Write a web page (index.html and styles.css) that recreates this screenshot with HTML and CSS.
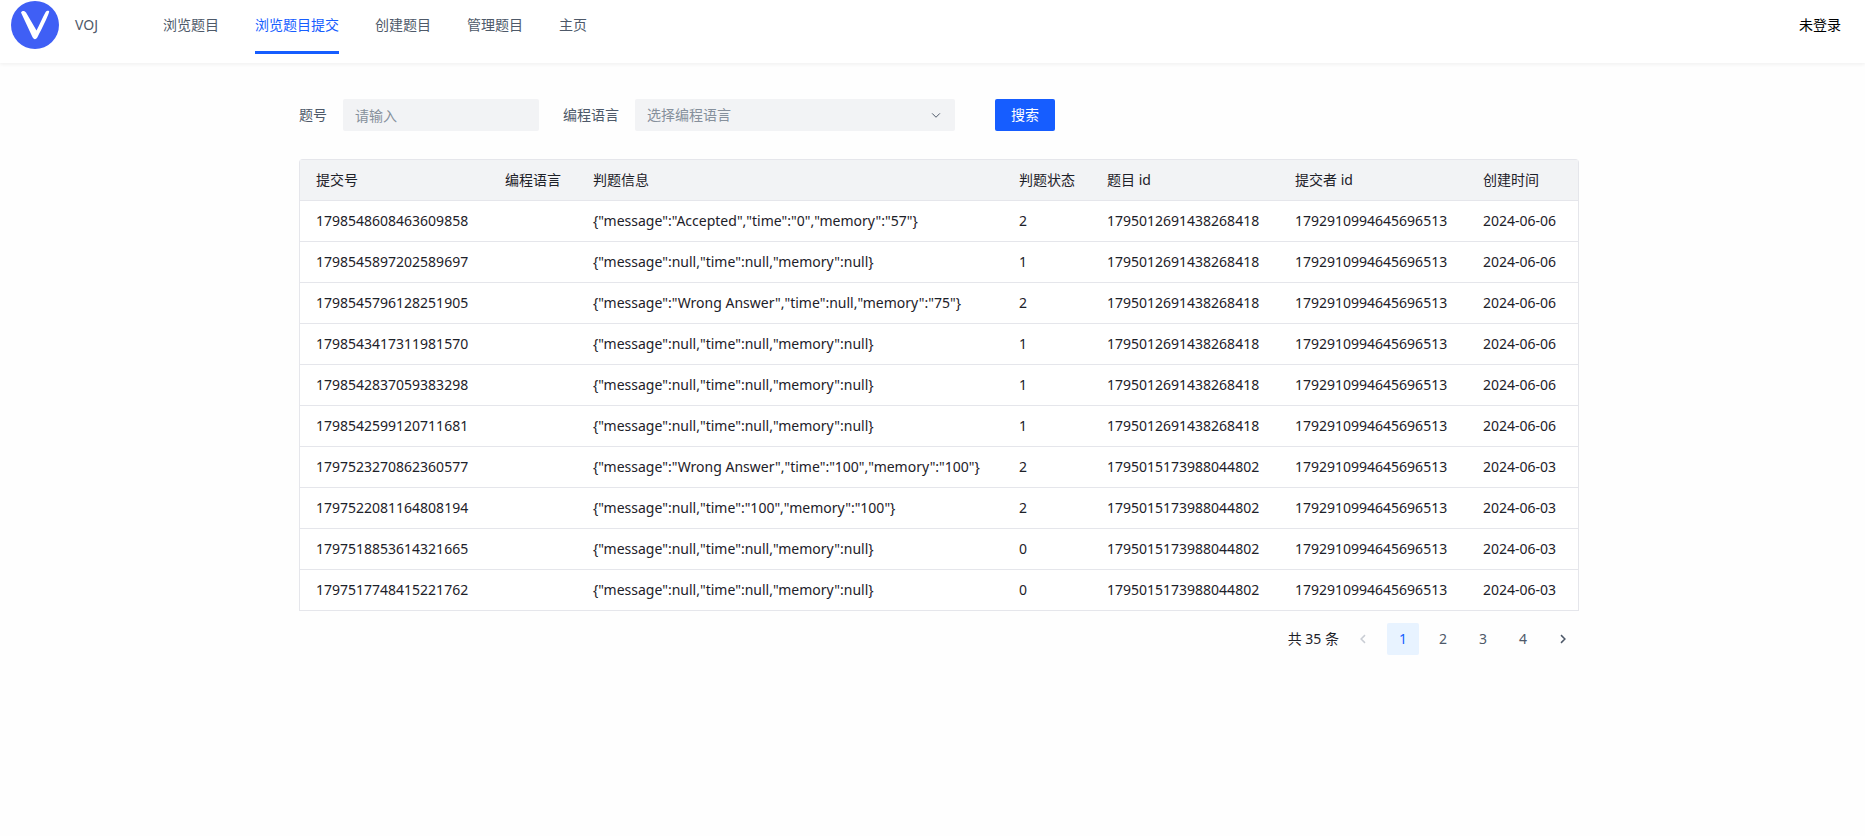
FILE: index.html
```html
<!DOCTYPE html>
<html lang="zh-CN">
<head>
<meta charset="utf-8">
<meta name="viewport" content="width=device-width, initial-scale=1">
<title>VOJ</title>
<link rel="stylesheet" href="styles.css">
</head>
<body>
<header class="header">
  <a class="brand" href="#">
    <svg class="brand-logo" viewBox="0 0 48 48" aria-hidden="true">
      <circle cx="24" cy="24" r="24" fill="#3f5ff5"/>
      <path d="M10 11.500C10.500 9.500 13.800 9.300 15 11.500L25.500 29.500C28.500 23.500 31.500 16.500 34.500 11.200C35.800 9.400 38.300 9.500 38.200 10.800C36.500 16.500 30.500 28.500 26.800 35.500C25.200 38.900 22.800 39 21.300 35.800C18 28.500 13.500 19 10 11.500Z" fill="#fff"/>
    </svg>
    <span class="brand-name">VOJ</span>
  </a>
  <nav class="nav">
    <a class="nav-item" href="#">浏览题目</a>
    <a class="nav-item nav-item-active" href="#" aria-current="page">浏览题目提交</a>
    <a class="nav-item" href="#">创建题目</a>
    <a class="nav-item" href="#">管理题目</a>
    <a class="nav-item" href="#">主页</a>
  </nav>
  <div class="user">未登录</div>
</header>
<main class="main">
  <div class="content">
    <form class="search">
      <label class="label" for="question">题号</label>
      <input class="field field-question" id="question" type="text" placeholder="请输入">
      <label class="label" for="language">编程语言</label>
      <div class="select-box">
        <select class="field select" id="language">
          <option value="">选择编程语言</option>
          <option>java</option>
          <option>cpp</option>
          <option>go</option>
        </select>
        <svg class="select-arrow" viewBox="0 0 48 48" aria-hidden="true"><path d="M39.600 17.443 24.043 33 8.487 17.443"/></svg>
      </div>
      <button class="submit" type="button">搜索</button>
    </form>
    <table class="table">
      <colgroup>
        <col class="col-id"><col class="col-short"><col><col class="col-short"><col class="col-ref"><col class="col-ref"><col class="col-date">
      </colgroup>
      <thead>
        <tr><th>提交号</th><th>编程语言</th><th>判题信息</th><th>判题状态</th><th>题目 id</th><th>提交者 id</th><th>创建时间</th></tr>
      </thead>
      <tbody>
        <tr><td>1798548608463609858</td><td></td><td>{"message":"Accepted","time":"0","memory":"57"}</td><td>2</td><td>1795012691438268418</td><td>1792910994645696513</td><td>2024-06-06</td></tr>
        <tr><td>1798545897202589697</td><td></td><td>{"message":null,"time":null,"memory":null}</td><td>1</td><td>1795012691438268418</td><td>1792910994645696513</td><td>2024-06-06</td></tr>
        <tr><td>1798545796128251905</td><td></td><td>{"message":"Wrong Answer","time":null,"memory":"75"}</td><td>2</td><td>1795012691438268418</td><td>1792910994645696513</td><td>2024-06-06</td></tr>
        <tr><td>1798543417311981570</td><td></td><td>{"message":null,"time":null,"memory":null}</td><td>1</td><td>1795012691438268418</td><td>1792910994645696513</td><td>2024-06-06</td></tr>
        <tr><td>1798542837059383298</td><td></td><td>{"message":null,"time":null,"memory":null}</td><td>1</td><td>1795012691438268418</td><td>1792910994645696513</td><td>2024-06-06</td></tr>
        <tr><td>1798542599120711681</td><td></td><td>{"message":null,"time":null,"memory":null}</td><td>1</td><td>1795012691438268418</td><td>1792910994645696513</td><td>2024-06-06</td></tr>
        <tr><td>1797523270862360577</td><td></td><td>{"message":"Wrong Answer","time":"100","memory":"100"}</td><td>2</td><td>1795015173988044802</td><td>1792910994645696513</td><td>2024-06-03</td></tr>
        <tr><td>1797522081164808194</td><td></td><td>{"message":null,"time":"100","memory":"100"}</td><td>2</td><td>1795015173988044802</td><td>1792910994645696513</td><td>2024-06-03</td></tr>
        <tr><td>1797518853614321665</td><td></td><td>{"message":null,"time":null,"memory":null}</td><td>0</td><td>1795015173988044802</td><td>1792910994645696513</td><td>2024-06-03</td></tr>
        <tr><td>1797517748415221762</td><td></td><td>{"message":null,"time":null,"memory":null}</td><td>0</td><td>1795015173988044802</td><td>1792910994645696513</td><td>2024-06-03</td></tr>
      </tbody>
    </table>
    <nav class="pagination" aria-label="分页">
      <span class="total">共 35 条</span>
      <button class="page" type="button" disabled aria-label="上一页"><svg class="page-arrow" viewBox="0 0 48 48" aria-hidden="true"><path d="M32 8.400 16.444 23.956 32 39.513"/></svg></button>
      <button class="page page-active" type="button" aria-current="page">1</button>
      <button class="page" type="button">2</button>
      <button class="page" type="button">3</button>
      <button class="page" type="button">4</button>
      <button class="page" type="button" aria-label="下一页"><svg class="page-arrow" viewBox="0 0 48 48" aria-hidden="true"><path d="m16 39.513 15.556-15.557L16 8.400"/></svg></button>
    </nav>
  </div>
</main>
</body>
</html>
```

FILE: styles.css
```css
* {
  box-sizing: border-box;
}

body {
  margin: 0;
  min-height: 100vh;
  background: #fefefe;
  color: #1d2129;
  font-family: "Noto Sans", "Noto Sans CJK SC", sans-serif;
  font-size: 14px;
  line-height: 22px;
}

input,
select,
button {
  font: inherit;
}

a {
  color: inherit;
  text-decoration: none;
}

.header {
  display: flex;
  align-items: flex-start;
  height: 63px;
  padding: 0 24px 0 11px;
  background: #fff;
  box-shadow: 0 1px 4px #eee;
}

.brand {
  display: flex;
  align-items: center;
  gap: 16px;
  width: 152px;
  height: 50px;
  color: #4e5969;
}

.brand-logo {
  width: 48px;
  height: 48px;
}

.nav {
  display: flex;
  flex: 1;
  gap: 36px;
}

.nav-item {
  height: 54px;
  padding-top: 14px;
  color: #4e5969;
}

.nav-item-active {
  border-bottom: 3px solid #165dff;
  color: #165dff;
}

.user {
  padding-top: 14px;
  color: #000;
}

.main {
  padding: 36px 0 36px 13px;
}

.content {
  max-width: 1280px;
  margin: 0 auto;
}

.search {
  display: flex;
  align-items: center;
  margin-bottom: 28px;
}

.label {
  margin-right: 16px;
  color: #4e5969;
}

.field {
  height: 32px;
  padding: 0 12px;
  border: 0;
  border-radius: 2px;
  background: #f2f3f5;
  color: #86909c;
}

.field::placeholder {
  color: #86909c;
  opacity: 1;
}

.field-question {
  width: 196px;
  margin-right: 24px;
}

.select-box {
  position: relative;
  width: 320px;
  margin-right: 40px;
}

.select {
  width: 100%;
  appearance: none;
}

.select-arrow {
  position: absolute;
  top: 10px;
  right: 13px;
  width: 12px;
  height: 12px;
  fill: none;
  stroke: #4e5969;
  stroke-width: 4;
  pointer-events: none;
}

.submit {
  width: 60px;
  height: 32px;
  padding: 0;
  border: 0;
  border-radius: 2px;
  background: #165dff;
  color: #fff;
}

.table {
  width: 100%;
  table-layout: fixed;
  border: 1px solid #e5e6eb;
  border-bottom: 0;
  border-radius: 4px 4px 0 0;
  border-spacing: 0;
  background: #fff;
}

.col-id {
  width: 189px;
}

.col-ref {
  width: 188px;
}

.col-short {
  width: 88px;
}

.col-date {
  width: 111px;
}

.table th,
.table td {
  height: 41px;
  padding: 0 16px;
  border-bottom: 1px solid #e5e6eb;
  text-align: left;
  font-weight: 400;
  white-space: nowrap;
}

.table th {
  background: #f2f3f5;
}

.pagination {
  display: flex;
  align-items: center;
  justify-content: flex-end;
  gap: 8px;
  margin-top: 12px;
}

.page {
  display: flex;
  align-items: center;
  justify-content: center;
  width: 32px;
  height: 32px;
  padding: 0;
  border: 0;
  border-radius: 2px;
  background: transparent;
  color: #4e5969;
}

.page:disabled {
  color: #c9cdd4;
}

.page-active {
  background: #e8f3ff;
  color: #165dff;
}

.page-arrow {
  width: 12px;
  height: 12px;
  fill: none;
  stroke: currentColor;
  stroke-width: 6;
}
```
